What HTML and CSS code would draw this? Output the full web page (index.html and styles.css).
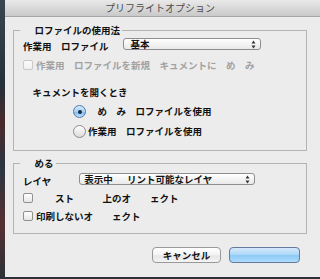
FILE: index.html
```html
<!DOCTYPE html>
<html lang="ja">
<head>
<meta charset="utf-8">
<title>プリフライトオプション</title>
<link rel="stylesheet" href="styles.css">
</head>
<body>
<div class="screen">
  <div class="desk-left"></div>
  <div class="window">
    <div class="titlebar">プリフライトオプション</div>
    <div class="content">
      <fieldset class="group group-profile">
        <legend>　ロファイルの使用法</legend>
        <div class="row row-popup first-popup">
          <span class="label">作業用　ロファイル</span>
          <div class="popup popup-profile">
            <span class="popup-text">基本</span>
            <svg class="arrows" width="5" height="9" viewBox="0 0 5 9"><path d="M2.5 0.5 L4.5 3.5 L0.5 3.5 Z M2.5 8.5 L4.5 5.5 L0.5 5.5 Z" fill="#333"/></svg>
          </div>
        </div>
        <div class="row check check-first disabled">
          <span class="box"></span>
          <span class="text">作業用　ロファイルを新規　キュメントに　め　み</span>
        </div>
        <div class="heading">　キュメントを開くとき</div>
        <div class="row radio-row radio-first">
          <span class="radio on"></span>
          <span class="text">　め　み　ロファイルを使用</span>
        </div>
        <div class="row radio-row">
          <span class="radio"></span>
          <span class="text">作業用　ロファイルを使用</span>
        </div>
      </fieldset>

      <fieldset class="group group-include">
        <legend>　める</legend>
        <div class="row row-popup second-popup">
          <span class="label">レイヤ</span>
          <div class="popup popup-layer">
            <span class="popup-text">表示中&ensp;　リント可能なレイヤ</span>
            <svg class="arrows" width="5" height="9" viewBox="0 0 5 9"><path d="M2.5 0.5 L4.5 3.5 L0.5 3.5 Z M2.5 8.5 L4.5 5.5 L0.5 5.5 Z" fill="#333"/></svg>
          </div>
        </div>
        <div class="row check check-a">
          <span class="box"></span>
          <span class="text">　　スト　　　上のオ　　ェクト</span>
        </div>
        <div class="row check check-b">
          <span class="box"></span>
          <span class="text">印刷しないオ　　ェクト</span>
        </div>
      </fieldset>

      <div class="buttons">
        <div class="btn btn-cancel">キャンセル</div>
        <div class="btn btn-ok"></div>
      </div>
    </div>
  </div>
</div>
</body>
</html>
```

FILE: styles.css
```css
* {
  box-sizing: border-box;
}

html,
body {
  margin: 0;
  padding: 0;
}

body {
  width: 320px;
  height: 279px;
  overflow: hidden;
  background: #262a2f;
  font-family: "Noto Sans CJK JP", "Noto Sans", sans-serif;
  color: #111;
}

.screen {
  display: flex;
  height: 279px;
  background: linear-gradient(#3a4650 0%, #24303a 30%, #4a2a2c 45%, #2a3540 60%, #553033 80%, #2c3238 100%);
}

.desk-left {
  width: 5px;
  flex: none;
}

.window {
  width: 315px;
  height: 277px;
  background: #ececec;
  display: flex;
  flex-direction: column;
}

.titlebar {
  height: 17px;
  line-height: 16px;
  border-bottom: 1px solid #a6a6a6;
  background: linear-gradient(#e9e9e9, #d6d6d6 60%, #c9c9c9);
  text-align: center;
  padding-right: 5px;
  font-size: 10px;
  color: #4c4c4c;
}

.content {
  padding: 0 13px 0 8px;
}

.group {
  margin: 7px 0 0;
  padding: 0 9px 12px;
  border: 1px solid #b4b4b4;
  min-width: 0;
}

.group-include {
  margin-top: 6px;
  padding-bottom: 11px;
}

.group legend {
  margin-left: -3px;
  padding: 0 2px 0 5px;
  font-size: 9.5px;
  line-height: 12px;
  font-weight: bold;
}

.row {
  display: flex;
  align-items: flex-start;
  font-size: 9.5px;
  font-weight: bold;
  line-height: 12px;
}

.first-popup {
  margin-top: 2px;
}

.second-popup {
  margin-top: 4px;
}

.label {
  margin-top: 2px;
  white-space: pre;
}

.popup {
  display: flex;
  align-items: center;
  justify-content: space-between;
  height: 12px;
  border: 1px solid #8e8e8e;
  border-radius: 3px;
  background: linear-gradient(#ffffff, #f4f4f4 50%, #e9e9e9);
  padding: 0 4px 0 4px;
  line-height: 10px;
}

.popup-profile {
  margin-left: 14px;
  width: 138px;
  padding-left: 7px;
}

.popup-layer {
  margin-left: 28px;
  width: 176px;
}

.popup-text {
  white-space: pre;
}

.arrows {
  display: block;
  flex: none;
}

.check {
  height: 12px;
}

.check-first {
  margin-top: 7px;
}

.check-a {
  margin-top: 5px;
}

.check-b {
  margin-top: 6px;
}

.box {
  flex: none;
  width: 10px;
  height: 10px;
  margin-top: 1px;
  border: 1px solid #909090;
  border-radius: 2px;
  background: linear-gradient(#ffffff, #e6e6e6);
}

.check .text {
  margin-left: 3px;
  white-space: pre;
}

.disabled {
  color: #a2a2a2;
}

.disabled .box {
  border-color: #c8c8c8;
  background: linear-gradient(#fbfbfb, #f0f0f0);
}

.heading {
  margin-top: 15px;
  font-size: 9.5px;
  font-weight: bold;
  line-height: 12px;
  white-space: pre;
}

.radio-row {
  margin-top: 7px;
  height: 13px;
  line-height: 13px;
}

.radio {
  flex: none;
  width: 13px;
  height: 13px;
  margin-left: 50px;
  border: 1px solid #8c8c8c;
  border-radius: 50%;
  background: linear-gradient(#ffffff, #ededed 50%, #dcdcdc);
  display: flex;
  align-items: center;
  justify-content: center;
}

.radio.on {
  border-color: #5a76a6;
  background: linear-gradient(#d6ebfc, #a6d2f6 50%, #7dbcf0 55%, #bfe2fb);
}

.radio.on::after {
  content: "";
  width: 4px;
  height: 4px;
  border-radius: 50%;
  background: #1c2940;
}

.radio-row .text {
  margin-left: 2px;
  white-space: pre;
}

.buttons {
  display: flex;
  justify-content: flex-end;
  gap: 8px;
  margin-top: 13px;
  padding-right: 7px;
}

.btn {
  height: 16px;
  border: 1px solid #999999;
  border-radius: 4px;
  background: linear-gradient(#ffffff, #f3f3f3 50%, #e6e6e6 55%, #f4f4f4);
  display: flex;
  align-items: center;
  justify-content: center;
  font-size: 9.5px;
  font-weight: bold;
  line-height: 12px;
}

.btn-cancel {
  width: 69px;
}

.btn-ok {
  width: 71px;
  border-color: #64799c;
  background: linear-gradient(#d3e9fc, #b0d9f8 45%, #8ccaf5 55%, #aedcfb);
}
```
